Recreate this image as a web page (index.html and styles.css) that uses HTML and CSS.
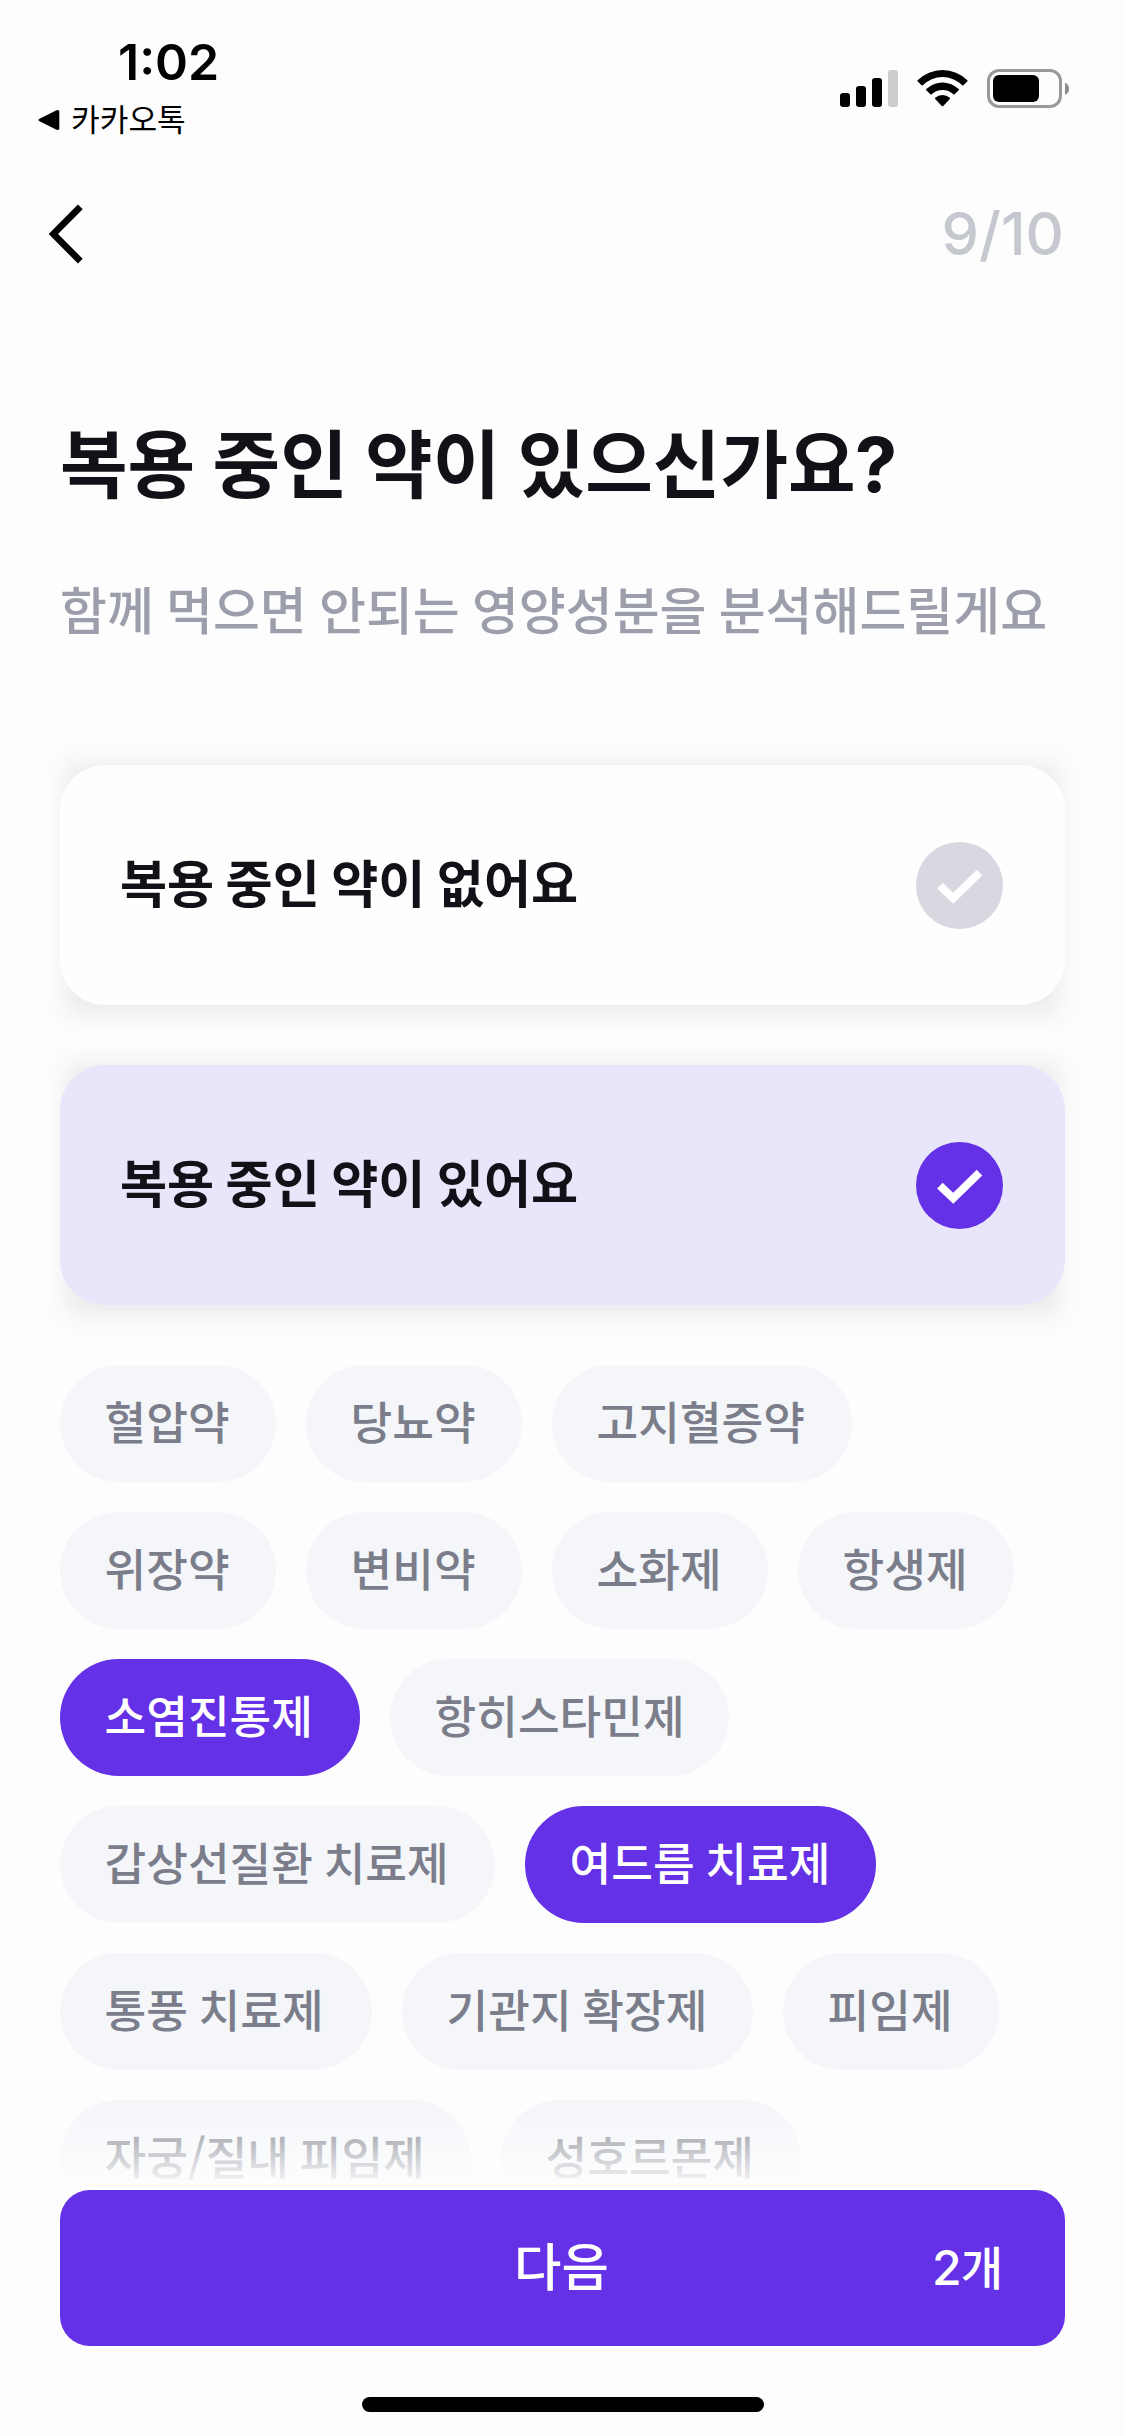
FILE: index.html
```html
<!DOCTYPE html>
<html lang="ko">
<head>
<meta charset="utf-8">
<meta name="viewport" content="width=device-width">
<title>복용 중인 약</title>
<link rel="stylesheet" href="styles.css">
</head>
<body>
<div class="screen">
  <div class="status">
    <div class="status-left">
      <div class="time">1:02</div>
      <div class="return-app">
        <svg class="return-arrow" width="22" height="22" viewBox="0 0 22 22"><path d="M2 9.4 18.6 1.3Q21.3.2 21.3 2.8V19.2Q21.3 21.8 18.6 20.7L2 12.6Q-1.2 11 2 9.4Z"/></svg>
        <span>카카오톡</span>
      </div>
    </div>
    <div class="status-icons">
      <svg class="signal" width="58" height="39" viewBox="0 0 58 39">
        <rect x="0" y="24" width="10" height="14" rx="3"/>
        <rect x="16" y="17" width="10" height="21" rx="3"/>
        <rect x="32" y="9" width="10" height="29" rx="3"/>
        <rect x="48" y="1" width="10" height="37" rx="3" fill="#ccc"/>
      </svg>
      <svg class="wifi" width="51" height="39" viewBox="0 0 51 39">
        <path d="M.6 11.2A35.5 35.5 0 0 1 50.4 11.2Q50.9 11.8 50.3 12.4L46.4 16.2Q45.8 16.8 45.2 16.2A28 28 0 0 0 5.8 16.2Q5.2 16.8 4.6 16.2L.7 12.4Q.1 11.8.6 11.2Z"/>
        <path d="M9.3 20A23.3 23.3 0 0 1 41.7 20Q42.3 20.6 41.7 21.2L37.6 25.2Q37 25.8 36.4 25.2A15.9 15.9 0 0 0 14.6 25.2Q14 25.8 13.4 25.2L9.3 21.2Q8.7 20.6 9.3 20Z"/>
        <path d="M18.2 28.8A10.8 10.8 0 0 1 32.8 28.8Q33.4 29.5 32.8 30.1L26.2 37Q25.5 37.7 24.8 37L18.2 30.1Q17.6 29.5 18.2 28.8Z"/>
      </svg>
      <svg class="battery" width="83" height="39" viewBox="0 0 83 39">
        <rect x="1.5" y="1.5" width="72" height="36" rx="10.5" fill="none" stroke="#999" stroke-width="3"/>
        <rect x="6" y="6" width="46" height="27" rx="6"/>
        <path d="M78 13.5Q82 15.5 82 19.8T78 26Z" fill="#8c8c8c"/>
      </svg>
    </div>
  </div>

  <header class="nav">
    <svg class="back" width="36" height="60" viewBox="0 0 36 60"><path d="M32.3 2.9 5.4 30 32.3 57.1" fill="none" stroke="#000" stroke-width="6.7"/></svg>
    <span class="step">9/10</span>
  </header>

  <main class="content">
    <h1 class="title">복용 중인 약이 있으신가요<span class="mark">?</span></h1>
    <p class="subtitle">함께 먹으면 안되는 영양성분을 분석해드릴게요</p>

    <div class="options">
      <div class="option">
        <span class="option-label">복용 중인 약이 없어요</span>
        <svg class="check" width="87" height="87" viewBox="0 0 87 87"><circle cx="43.5" cy="43.5" r="43.5" fill="#d7d8e0"/><path d="M23.9 43.6 37.2 56.3 63.5 30.7" fill="none" stroke="#fff" stroke-width="8"/></svg>
      </div>
      <div class="option option-on">
        <span class="option-label">복용 중인 약이 있어요</span>
        <svg class="check" width="87" height="87" viewBox="0 0 87 87"><circle cx="43.5" cy="43.5" r="43.5" fill="#6431e7"/><path d="M23.9 43.6 37.2 56.3 63.5 30.7" fill="none" stroke="#fff" stroke-width="8"/></svg>
      </div>
    </div>

    <div class="chips">
      <div class="chip-row"><span class="chip len-3">혈압약</span><span class="chip len-3">당뇨약</span><span class="chip len-5">고지혈증약</span></div>
      <div class="chip-row"><span class="chip len-3">위장약</span><span class="chip len-3">변비약</span><span class="chip len-3">소화제</span><span class="chip len-3">항생제</span></div>
      <div class="chip-row"><span class="chip len-5 chip-on">소염진통제</span><span class="chip len-6">항히스타민제</span></div>
      <div class="chip-row"><span class="chip len-9">갑상선질환 치료제</span><span class="chip len-7 chip-on">여드름 치료제</span></div>
      <div class="chip-row"><span class="chip len-5s">통풍 치료제</span><span class="chip len-7">기관지 확장제</span><span class="chip len-3">피임제</span></div>
      <div class="chip-row"><span class="chip len-10">자궁/질내 피임제</span><span class="chip len-5">성호르몬제</span></div>
    </div>
    <div class="fade"></div>
  </main>

  <footer class="footer">
    <div class="next">
      <span class="next-label">다음</span>
      <span class="count"><span class="count-num">2</span>개</span>
    </div>
    <div class="home-bar"></div>
  </footer>
</div>
</body>
</html>
```
FILE: styles.css
```css
* { box-sizing: border-box; }

body {
  margin: 0;
  background: #fdfdfd;
  color: #111117;
  font-family: "Noto Sans CJK KR", sans-serif;
}

.screen {
  width: 1125px;
  height: 2436px;
  display: flex;
  flex-direction: column;
  overflow: hidden;
}

/* status bar */
.status {
  flex: none;
  height: 165px;
  display: flex;
  justify-content: space-between;
  color: #000;
}
.status-left { padding-top: 37px; }
.time {
  margin-left: 118px;
  font: 600 50px/50px Inter, sans-serif;
}
.return-app {
  margin-top: 13px;
  padding-left: 38px;
  display: flex;
  align-items: center;
  gap: 11px;
  font-size: 31.2px;
  line-height: 36px;
}
.return-arrow { margin-top: 4px; }
.status-icons {
  display: flex;
  padding: 69px 55px 0 0;
  height: 108px;
}
.signal { margin-right: 19px; }
.wifi { margin-right: 19px; }

/* navigation */
.nav {
  flex: none;
  height: 138px;
  display: flex;
  align-items: center;
  justify-content: space-between;
  padding: 0 61px 0 48px;
}
.step {
  padding-bottom: 2px;
  color: #c5c8cf;
  font: 500 59.5px/60px Inter, sans-serif;
}

/* scrolling content */
.content {
  position: relative;
  flex: none;
  height: 1877px;
  padding: 113px 60px 0;
  overflow: hidden;
}
.title {
  margin: 0;
  font-size: 73.5px;
  font-weight: 700;
  line-height: 88px;
  word-spacing: -3.3px;
  white-space: nowrap;
}
.mark {
  font: 700 76px/76px Inter, sans-serif;
  margin-left: -1px;
}
.subtitle {
  margin: 74px 0 0;
  color: #9c9fab;
  font-size: 51px;
  font-weight: 500;
  line-height: 60px;
  word-spacing: -2.1px;
  white-space: nowrap;
}

.options {
  margin-top: 127px;
  display: flex;
  flex-direction: column;
  gap: 60px;
  isolation: isolate;
}
.option {
  position: relative;
  height: 240px;
  padding: 0 62px 0 60px;
  display: flex;
  align-items: center;
  justify-content: space-between;
  border-radius: 45px;
  background: #fefefe;
}
/* soft square-cornered shadow behind each card */
.option::before {
  content: "";
  position: absolute;
  z-index: -1;
  inset: -2px 6px -10px;
  border-radius: 4px;
  background: rgba(20, 20, 50, 0.08);
  filter: blur(11px);
}
.option-on { background: #e8e6fa; }
.option-label {
  padding-bottom: 8px;
  font-size: 51.2px;
  font-weight: 700;
  line-height: 60px;
  word-spacing: -2.9px;
}

.chips {
  margin-top: 60px;
  display: flex;
  flex-direction: column;
  gap: 30px;
}
.chip-row {
  display: flex;
  gap: 30px;
}
.chip {
  flex: none;
  height: 117px;
  padding-left: 44.6px;
  border-radius: 58.5px;
  background: #f4f6fa;
  color: #7b7e8a;
  font-size: 45.3px;
  font-weight: 500;
  line-height: 111px;
  word-spacing: -2px;
  white-space: nowrap;
}
.chip-on {
  background: #6431e7;
  color: #fff;
}
.len-3 { width: 216px; }
.len-5 { width: 300px; }
.len-5s { width: 312px; }
.len-6 { width: 339px; }
.len-7 { width: 351px; }
.len-9 { width: 435px; }
.len-10 { width: 411px; }

.fade {
  position: absolute;
  left: 0;
  right: 0;
  bottom: 0;
  height: 80px;
  background: linear-gradient(rgba(253, 253, 253, 0), rgba(253, 253, 253, 0.9));
}

/* bottom action */
.footer {
  flex: none;
  padding: 10px 60px 0;
}
.next {
  height: 156px;
  padding: 0 62px 8px;
  display: grid;
  grid-template-columns: 1fr auto 1fr;
  align-items: center;
  border-radius: 30px;
  background: #6431e7;
  color: #fff;
  font-weight: 500;
}
.next-label {
  grid-column: 2;
  font-size: 51.5px;
  line-height: 60px;
  margin-right: 2px;
}
.count {
  justify-self: end;
  padding-top: 2px;
  font-size: 46px;
  line-height: 60px;
}
.count-num {
  font: 500 48px/48px Inter, sans-serif;
  margin-right: -1px;
}
.home-bar {
  width: 402px;
  height: 15px;
  margin: 51px auto 0;
  border-radius: 8px;
  background: #000;
}
```
